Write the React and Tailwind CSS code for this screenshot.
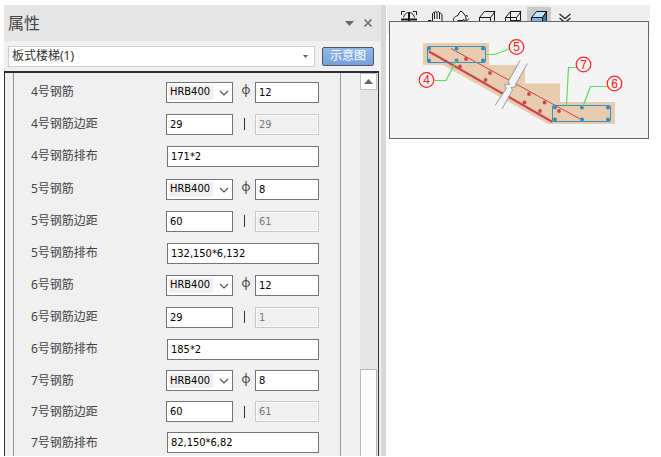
const GROUPS = [
  { no: 4, diameter: "12", margin: "29", inner: "29", layout: "171*2", rowClass: "h-8", groupClass: "pb-px" },
  { no: 5, diameter: "8", margin: "60", inner: "61", layout: "132,150*6,132", rowClass: "h-8", groupClass: "" },
  { no: 6, diameter: "12", margin: "29", inner: "1", layout: "185*2", rowClass: "h-8", groupClass: "" },
  { no: 7, diameter: "8", margin: "60", inner: "61", layout: "82,150*6,82", rowClass: "h-[31px]", groupClass: "" },
];

const FIELD =
  "h-[21px] border border-[#767676] bg-white px-[3px] text-[11px] text-black outline-none font-['DejaVu_Sans_Condensed','Noto_Sans',sans-serif]";

function Row({ id, label, className, children }) {
  return (
    <div className={`flex items-center justify-between ${className}`}>
      <label htmlFor={id} className="whitespace-nowrap">
        {label}
      </label>
      <div className="flex w-[153px] shrink-0 items-center justify-between">{children}</div>
    </div>
  );
}

function RebarGroup({ no, diameter, margin, inner, layout, rowClass, groupClass }) {
  const id = `rebar-${no}`;
  return (
    <div className={groupClass}>
      <Row id={`${id}-grade`} label={`${no}号钢筋`} className={rowClass}>
        <div className="relative w-[67px]">
          <select
            id={`${id}-grade`}
            className={`${FIELD} block w-full appearance-none bg-[linear-gradient(#f0f0f0,#f0f0f0)] bg-[length:44px_15px] bg-[position:2px_2px] bg-no-repeat`}
          >
            <option>HRB400</option>
          </select>
          <svg className="pointer-events-none absolute top-[7px] right-[3px] h-2 w-3" viewBox="0 0 12 8" fill="none" stroke="#555" strokeWidth="1.2">
            <path d="M2 2l4 4 4-4" />
          </svg>
        </div>
        <span className="pb-1 pl-1">ф</span>
        <input aria-label={`${no}号钢筋直径`} defaultValue={diameter} className={`${FIELD} w-16`} />
      </Row>
      <Row id={`${id}-margin`} label={`${no}号钢筋边距`} className={rowClass}>
        <input id={`${id}-margin`} defaultValue={margin} className={`${FIELD} w-[67px]`} />
        <span className="h-3 w-px bg-[#333]" />
        <input
          aria-label={`${no}号钢筋内侧边距`}
          defaultValue={inner}
          disabled
          className="h-[21px] w-16 border border-[#c8c8c8] bg-[#efefef] px-[3px] font-['DejaVu_Sans_Condensed','Noto_Sans',sans-serif] text-[11px] text-[#777] shadow-[inset_0_0_0_1px_#fafafa]"
        />
      </Row>
      <Row id={`${id}-layout`} label={`${no}号钢筋排布`} className={rowClass}>
        <input id={`${id}-layout`} defaultValue={layout} className={`${FIELD} ml-px w-full`} />
      </Row>
    </div>
  );
}

function PropertyPanel() {
  return (
    <section className="flex min-h-0 flex-col border-r-[5px] border-[#d8d8d8] bg-[#f0f0f0]">
      <header className="flex h-9 shrink-0 items-center justify-between bg-[#e5e5e5] pr-[7px] pl-1">
        <h1 className="text-[16px] leading-5 text-[#444]">属性</h1>
        <div className="flex items-center gap-[7px]">
          <button aria-label="菜单" className="flex h-4 w-3 items-center justify-center">
            <svg className="h-[5px] w-[9px]" viewBox="0 0 9 5" fill="#666">
              <path d="M0 0h9L4.500 5z" />
            </svg>
          </button>
          <button aria-label="关闭" className="flex h-4 w-3 items-center justify-center">
            <svg className="h-2 w-2" viewBox="0 0 8 8" stroke="#666" strokeWidth="1.500">
              <path d="M.5.5l7 7M7.500.5l-7 7" />
            </svg>
          </button>
        </div>
      </header>

      <div className="flex h-[30px] shrink-0 items-center gap-[7px] pr-[7px] pl-1">
        <div className="relative flex-1">
          <select aria-label="构件" className="block h-[21px] w-full appearance-none border border-[#d0d0d0] bg-white px-[3px] text-[12px] text-[#333] outline-none">
            <option>板式楼梯(1)</option>
          </select>
          <svg className="pointer-events-none absolute top-[9px] right-[7px] h-[3px] w-[5px]" viewBox="0 0 5 3" fill="#666">
            <path d="M0 0h5L2.500 3z" />
          </svg>
        </div>
        <button className="flex h-[19px] w-[52px] items-center justify-center rounded-xs border border-[#555] bg-linear-to-b from-[#8fb8ec] to-[#76a0da] text-[12px] text-white">
          示意图
        </button>
      </div>

      <div className="mr-[2px] flex min-h-0 flex-1 justify-between overflow-hidden border-x border-t-2 border-[#2b2f33] bg-[#f0f0f0]">
        <form className="mr-[19px] ml-2 flex-1 border-x border-[#999] pt-[3px] pr-[21px] pl-[17px] text-[12px] leading-4 text-[#444]">
          {GROUPS.map((group) => (
            <RebarGroup key={group.no} {...group} />
          ))}
        </form>
        {/* Scroll track */}
        <div className="flex w-[18px] flex-col justify-between bg-[#e6e6e6] pr-px">
          <button type="button" aria-label="向上滚动" className="flex h-[17px] items-center justify-center border border-[#c0c0c0] bg-[#fcfcfc]">
            <svg className="h-[5px] w-[9px]" viewBox="0 0 9 5" fill="#666">
              <path d="M0 5h9L4.500 0z" />
            </svg>
          </button>
          <div className="h-[87px] border border-b-0 border-[#b8b8b8] bg-[#fcfcfc]" />
        </div>
      </div>
    </section>
  );
}

const TOOLS = [
  {
    name: "全图",
    art: (
      <>
        <path d="M4.500 8V4.500H8M16 4.500h3.500V8M4.500 16v3.500H8M16 19.500h3.500V16" />
        <path d="M6.500 10.500C7.500 6.500 10 5.500 12 5.500s4.500 1 5.500 5" />
        <path d="M12 5v14M4 12.500h16" strokeWidth="2" />
      </>
    ),
  },
  {
    name: "平移",
    art: (
      <path d="M5 13.500h3l1.500 1.500V6.500L11.500 5v7M11.500 5.500l1-1 1.500 1V12M14 5.500l1-1 1.500 1V12M16.500 6h1l1.500 1.500V15l-2 4.500h-6L8 16" />
    ),
  },
  {
    name: "旋转",
    art: (
      <>
        <path d="M9 8.500C5.500 9.500 4.500 11 4.500 13s3 4.500 7.500 4.500" />
        <path d="M9 8.500L9.500 7 11 4.500h2L15 7l2 3v4.500M14 12l3 2.500 3-3M8.500 13.500h6M17 8l2 1.500" />
      </>
    ),
  },
  {
    name: "隐藏线",
    art: <path d="M4.500 10.500h11v9h-11zM4.500 10.500l5-6h10.500l-4.500 6M19.500 4.500v9l-4 6" />,
  },
  {
    name: "线框",
    art: <path d="M4.500 10.500h11v9h-11zM4.500 10.500l5-6h10.500l-4.500 6M19.500 4.500v9l-4 6M9.500 4.500v9h10M9.500 13.500l-5 6" />,
  },
  {
    name: "着色",
    active: true,
    art: (
      <>
        <path d="M4.500 10.500h11v9h-11z" fill="#74b9dc" />
        <path d="M4.500 10.500l5-6h10.500l-4.500 6z" fill="#b9e6f7" />
        <path d="M19.500 4.500v9l-4 6v-9z" fill="#3978ad" />
      </>
    ),
  },
  {
    name: "更多",
    art: <path d="M6.500 7l5.500 4.500L17.500 7M6.500 11l5.500 4.500 5.500-4.500" stroke="#333" strokeWidth="1.500" />,
  },
];

const BLUE_DOTS = [
  [40, 27.5], [67.5, 27.5], [94, 27.5], [40, 39.5], [67.5, 39.5], [94, 39.5],
  [166, 86.5], [193, 86.5], [219, 86.5], [166, 98.5], [193, 98.5], [219, 98.5],
];
const RED_DOTS = [
  [77, 38], [71, 45.5], [101, 52], [96.5, 59], [140, 73],
  [135.5, 81.5], [155.5, 81.5], [151, 90], [170, 90],
];
const CALLOUTS = [
  { n: 4, x: 37.5, y: 59, line: "45.5,59.5 57,59.5 67.5,39.5" },
  { n: 5, x: 127.5, y: 26, line: "97,33.5 105.5,33.5 120,28" },
  { n: 6, x: 225.5, y: 62.5, line: "218,65.5 201.5,65.5 193.5,86.5" },
  { n: 7, x: 194.5, y: 43.5, line: "187,46.5 179.5,46.5 177.5,84.5" },
];

function StairDiagram() {
  return (
    <svg className="block h-auto w-full" viewBox="1 1 258 116" role="img" aria-label="板式楼梯示意图">
      <path d="M34 22h66v22h36v18.500h35V81h55v22h-67L54 44H34z" fill="#e8ccb0" />
      <path d="M40 30.500L163.500 101" stroke="#c8474b" strokeWidth="2.200" />
      <path d="M62 27.500L193 99" stroke="#c8474b" />
      {RED_DOTS.map(([x, y]) => (
        <circle key={`${x}-${y}`} cx={x} cy={y} r="1.9" fill="#c8474b" />
      ))}
      {/* Break mark */}
      <path d="M131 39.500L119 61l2 2-6 1 2.500 3L106 84.500l7 3.500 10.500-19-1.500-2.500 5.500-1-1-2 12-21z" fill="#f4f4f4" />
      <g fill="none" stroke="#999">
        <path d="M131 39.500L119 61l2 2-6 1 2.500 3L106 84.500" />
        <path d="M138.500 42.500l-12 21 1 2-5.500 1 1.500 2.500L113 88" />
      </g>
      <rect x="38.5" y="25.5" width="58" height="16" rx="1" fill="none" stroke="#3d8fbd" />
      <rect x="163.500" y="84.500" width="58" height="16" rx="1" fill="none" stroke="#3d8fbd" />
      {BLUE_DOTS.map(([x, y]) => (
        <circle key={`${x}-${y}`} cx={x} cy={y} r="1.9" fill="#318abd" />
      ))}
      {CALLOUTS.map(({ n, x, y, line }) => (
        <g key={n}>
          <polyline points={line} fill="none" stroke="#5ddc5d" strokeWidth="1.200" />
          <circle cx={x} cy={y} r="7.300" fill="#f4f4f4" stroke="#ff2020" strokeWidth="1.200" />
          <text x={x} y={y + 4} textAnchor="middle" fill="#ff2020" className="font-['Liberation_Sans',sans-serif] text-[12px]">
            {n}
          </text>
        </g>
      ))}
    </svg>
  );
}

export default function App() {
  return (
    <main className="grid h-screen grid-cols-[382fr_275fr] grid-rows-[minmax(0,1fr)] overflow-hidden bg-white pt-[5px] pb-px pl-1 font-['Noto_Sans','Noto_Sans_CJK_SC',sans-serif]">
      <PropertyPanel />
      <section className="relative mr-[11px] ml-px">
        <div className="flex h-[29px] gap-[2px] bg-[#eeeeee] pt-[2px] pl-[10px]">
          {TOOLS.map(({ name, art, active }) => (
            <button key={name} aria-label={name} className={`size-6 ${active ? "bg-[#cacaca]" : ""}`}>
              <svg className="size-6" viewBox="0 0 24 24" fill="none" stroke="#1a1a1a">
                {art}
              </svg>
            </button>
          ))}
        </div>
        {/* Diagram popup covers the lower half of the toolbar */}
        <div className="absolute top-4 right-px left-[2px] border border-[#666] bg-[#f4f4f4]">
          <StairDiagram />
        </div>
      </section>
    </main>
  );
}
